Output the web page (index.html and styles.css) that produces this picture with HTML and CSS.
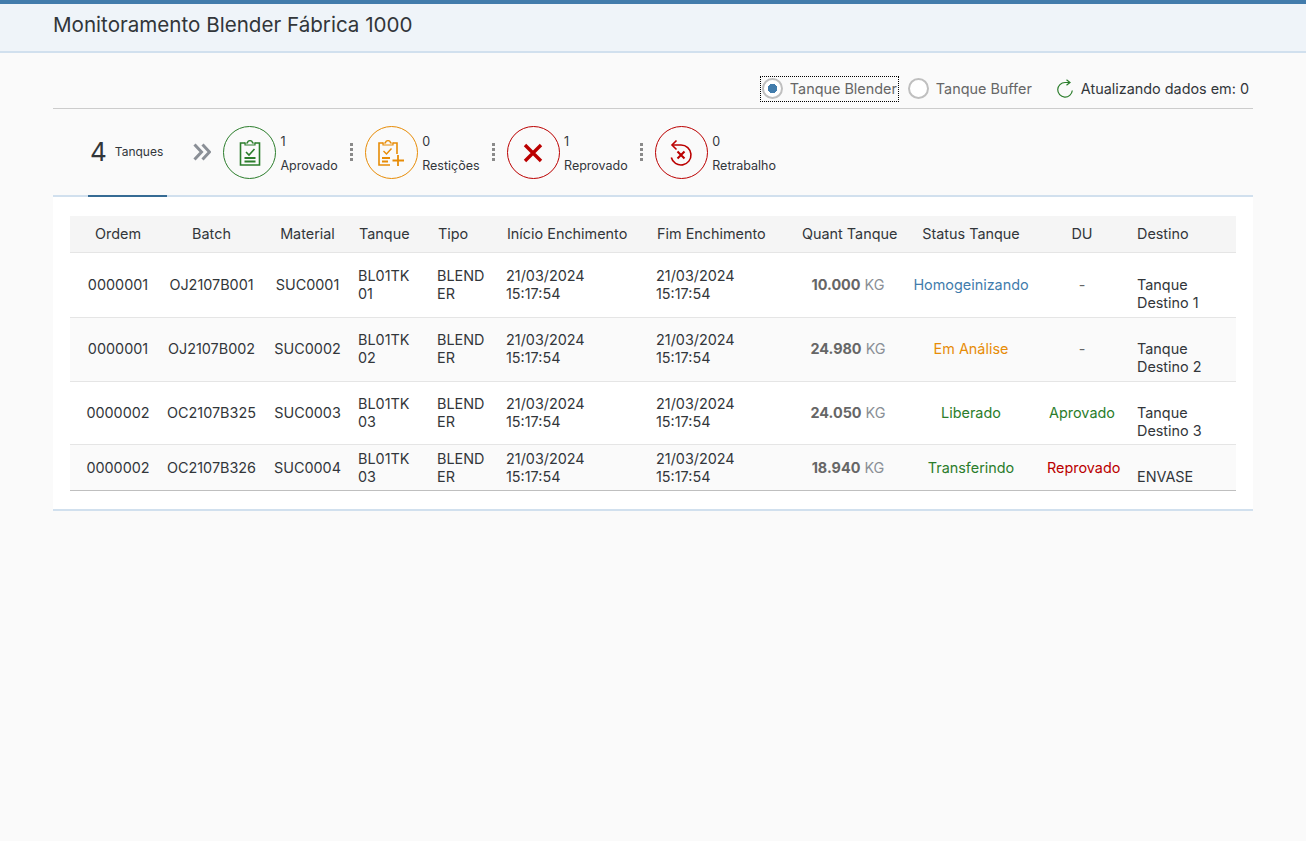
FILE: index.html
```html
<!DOCTYPE html>
<html lang="pt">
<head>
    <meta charset="UTF-8">
    <meta name="viewport" content="width=device-width, initial-scale=1.0">
    <title>Monitoramento Blender</title>
    <link rel="stylesheet" href="styles.css">
</head>
<body>
    <header class="page-header">
        <h1>Monitoramento Blender Fábrica 1000</h1>
    </header>

    <main class="content">
        <div class="toolbar">
            <label class="radio radio-focus"><span class="radio-circle radio-on"></span>Tanque Blender</label>
            <label class="radio"><span class="radio-circle"></span>Tanque Buffer</label>
            <span class="refresh">
                <svg class="refresh-icon" viewBox="0 0 16 20" width="16" height="20">
                    <path d="M13 3.5 H8 A7.3 7.3 0 1 0 15.3 11.5" fill="none" stroke="#2b7d2b" stroke-width="1.2"/>
                    <path d="M9.5 0.8 L13 3.5 L9.5 6.2" fill="none" stroke="#2b7d2b" stroke-width="1.2"/>
                </svg>
                Atualizando dados em: 0
            </span>
        </div>

        <div class="tabs">
            <div class="tab-total"><span class="tab-count">4</span><span class="tab-label">Tanques</span></div>
            <svg class="tab-arrow" viewBox="0 0 18 18" width="18" height="18">
                <path d="M1.5 1.5 L8.5 9 L1.5 16.5 M9.5 1.5 L16.5 9 L9.5 16.5" fill="none" stroke="#8a8f96" stroke-width="3"/>
            </svg>

            <div class="tab-item">
                <span class="tab-icon icon-green">
                    <svg viewBox="0 0 24 28" width="24" height="28">
                        <path d="M7 4 H2.5 V26 H21.5 V4 H17" fill="none" stroke="currentColor" stroke-width="1.6"/>
                        <path d="M7 6 V4 H9.5 C9.5 0.8 14.5 0.8 14.5 4 H17 V6 Z" fill="none" stroke="currentColor" stroke-width="1.2"/>
                        <path d="M8 13 L11 16 L16.5 10" fill="none" stroke="currentColor" stroke-width="1.6"/>
                        <path d="M6.5 19 H17.5 M6.5 22.5 H17.5" stroke="currentColor" stroke-width="1.8"/>
                    </svg>
                </span>
                <span class="tab-text"><span>1</span><span>Aprovado</span></span>
            </div>
            <span class="tab-sep"></span>

            <div class="tab-item">
                <span class="tab-icon icon-orange">
                    <svg viewBox="0 0 28 28" width="28" height="28">
                        <path d="M6 4 H2 V26 H13 M20 15 V4 H16" fill="none" stroke="currentColor" stroke-width="1.6"/>
                        <path d="M6 6 V4 H8.5 C8.5 0.8 13.5 0.8 13.5 4 H16 V6 Z" fill="none" stroke="currentColor" stroke-width="1.2"/>
                        <path d="M6.5 12 L9.5 15 L14.5 9.5" fill="none" stroke="currentColor" stroke-width="1.4"/>
                        <path d="M5 19 H13 M5 22.5 H11" stroke="currentColor" stroke-width="1.8"/>
                        <path d="M21 16 V27 M15.5 21.5 H27" stroke="currentColor" stroke-width="1.8"/>
                    </svg>
                </span>
                <span class="tab-text"><span>0</span><span>Restições</span></span>
            </div>
            <span class="tab-sep"></span>

            <div class="tab-item">
                <span class="tab-icon icon-red">
                    <svg viewBox="0 0 20 20" width="20" height="20">
                        <path d="M2 2 L18 18 M18 2 L2 18" stroke="currentColor" stroke-width="3.4"/>
                    </svg>
                </span>
                <span class="tab-text"><span>1</span><span>Reprovado</span></span>
            </div>
            <span class="tab-sep"></span>

            <div class="tab-item">
                <span class="tab-icon icon-red">
                    <svg viewBox="0 0 26 28" width="26" height="28">
                        <path d="M4 6 H13 A10 10 0 1 1 3.3 18.5" fill="none" stroke="currentColor" stroke-width="1.6"/>
                        <path d="M8.5 1.5 L4 6 L8.5 10.5" fill="none" stroke="currentColor" stroke-width="1.6"/>
                        <path d="M9.5 12.5 L16.5 19.5 M16.5 12.5 L9.5 19.5" stroke="currentColor" stroke-width="2.1"/>
                    </svg>
                </span>
                <span class="tab-text"><span>0</span><span>Retrabalho</span></span>
            </div>
        </div>

        <section class="panel">
            <table class="tank-table">
                <colgroup>
                    <col class="col-ordem">
                    <col class="col-batch">
                    <col class="col-material">
                    <col class="col-tanque">
                    <col class="col-tipo">
                    <col class="col-inicio">
                    <col class="col-fim">
                    <col class="col-quant">
                    <col class="col-status">
                    <col class="col-du">
                    <col class="col-destino">
                </colgroup>
                <thead>
                    <tr>
                        <th class="center">Ordem</th>
                        <th class="center">Batch</th>
                        <th class="center">Material</th>
                        <th>Tanque</th>
                        <th>Tipo</th>
                        <th>Início Enchimento</th>
                        <th>Fim Enchimento</th>
                        <th class="center">Quant Tanque</th>
                        <th class="center">Status Tanque</th>
                        <th class="center">DU</th>
                        <th class="destino">Destino</th>
                    </tr>
                </thead>
                <tbody>
                    <tr class="row-h64">
                        <td class="center">0000001</td>
                        <td class="center">OJ2107B001</td>
                        <td class="center">SUC0001</td>
                        <td>BL01TK<br>01</td>
                        <td>BLEND<br>ER</td>
                        <td>21/03/2024<br>15:17:54</td>
                        <td>21/03/2024<br>15:17:54</td>
                        <td class="center"><b class="qty">10.000</b> <span class="unit">KG</span></td>
                        <td class="center st-blue">Homogeinizando</td>
                        <td class="center st-dash">-</td>
                        <td class="destino"><br>Tanque<br>Destino 1</td>
                    </tr>
                    <tr class="row-alt row-h63">
                        <td class="center">0000001</td>
                        <td class="center">OJ2107B002</td>
                        <td class="center">SUC0002</td>
                        <td>BL01TK<br>02</td>
                        <td>BLEND<br>ER</td>
                        <td>21/03/2024<br>15:17:54</td>
                        <td>21/03/2024<br>15:17:54</td>
                        <td class="center"><b class="qty">24.980</b> <span class="unit">KG</span></td>
                        <td class="center st-orange">Em Análise</td>
                        <td class="center st-dash">-</td>
                        <td class="destino"><br>Tanque<br>Destino 2</td>
                    </tr>
                    <tr>
                        <td class="center">0000002</td>
                        <td class="center">OC2107B325</td>
                        <td class="center">SUC0003</td>
                        <td>BL01TK<br>03</td>
                        <td>BLEND<br>ER</td>
                        <td>21/03/2024<br>15:17:54</td>
                        <td>21/03/2024<br>15:17:54</td>
                        <td class="center"><b class="qty">24.050</b> <span class="unit">KG</span></td>
                        <td class="center st-green">Liberado</td>
                        <td class="center st-green">Aprovado</td>
                        <td class="destino"><br>Tanque<br>Destino 3</td>
                    </tr>
                    <tr class="row-alt row-last">
                        <td class="center">0000002</td>
                        <td class="center">OC2107B326</td>
                        <td class="center">SUC0004</td>
                        <td>BL01TK<br>03</td>
                        <td>BLEND<br>ER</td>
                        <td>21/03/2024<br>15:17:54</td>
                        <td>21/03/2024<br>15:17:54</td>
                        <td class="center"><b class="qty">18.940</b> <span class="unit">KG</span></td>
                        <td class="center st-green">Transferindo</td>
                        <td class="center st-red">Reprovado</td>
                        <td class="destino"><br>ENVASE</td>
                    </tr>
                </tbody>
            </table>
        </section>
    </main>
</body>
</html>
```

FILE: styles.css
```css
* {
    box-sizing: border-box;
}

body {
    font-family: Inter, "Noto Sans", Arial, sans-serif;
    font-size: 14.4px;
    line-height: 18px;
    color: #32363a;
    background-color: #fafafa;
    margin: 0;
    min-height: 100vh;
}

.page-header {
    height: 53px;
    padding: 8px 53px 0;
    background-color: #eff4f9;
    border-top: 4px solid #427cac;
    border-bottom: 2px solid #d1e0ee;
}

.page-header h1 {
    margin: 0;
    font-size: 20.6px;
    line-height: 26px;
    font-weight: 400;
}

.content {
    padding: 24px 53px 0;
}

.toolbar {
    display: flex;
    justify-content: flex-end;
    align-items: center;
    height: 32px;
    padding: 0 4px 8px 0;
    border-bottom: 1px solid #cccccc;
}

.radio {
    display: flex;
    align-items: center;
    height: 24px;
    color: #666666;
}

.radio-focus {
    outline: 1px dotted #000;
    padding: 0 1px;
    margin-right: 10px;
}

.radio-circle {
    width: 21px;
    height: 21px;
    margin-right: 7px;
    border: 2px solid #bfbfbf;
    border-radius: 50%;
    background-color: #fff;
}

.radio-on {
    background: radial-gradient(circle, #427cac 0 4.5px, #fff 5px);
}

.refresh {
    display: flex;
    align-items: center;
    gap: 8px;
    margin-left: 25px;
}

.refresh-icon {
    display: block;
}

.tabs {
    display: flex;
    align-items: center;
    height: 88px;
    padding: 0 0 0 35px;
    border-bottom: 2px solid #d1e0ee;
}

.tab-total {
    display: flex;
    align-items: center;
    align-self: stretch;
    width: 79px;
    margin-bottom: -2px;
    padding-left: 2px;
    border-bottom: 2px solid #366b94;
}

.tab-count {
    font-size: 26px;
    margin-right: 8px;
}

.tab-label {
    font-size: 12px;
}

.tab-arrow {
    margin: 0 12px 0 26px;
}

.tab-item {
    display: flex;
    align-items: center;
}

.tab-icon {
    display: flex;
    align-items: center;
    justify-content: center;
    width: 53px;
    height: 53px;
    margin-right: 4.5px;
    border: 1px solid currentColor;
    border-radius: 50%;
}

.tab-icon svg {
    margin-top: 2px;
}

.icon-green {
    color: #2b7d2b;
}

.icon-orange {
    color: #e78c07;
}

.icon-red {
    color: #bb0000;
}

.tab-text {
    display: flex;
    flex-direction: column;
    gap: 6px;
    padding-top: 4px;
    font-size: 12.5px;
}

.tab-sep {
    width: 3px;
    height: 18px;
    margin: 0 12px;
    background: repeating-linear-gradient(#8a8a8a 0 3px, transparent 3px 5px);
}

.panel {
    height: 314px;
    padding: 19px 17px 0;
    background-color: #fff;
    border-bottom: 2px solid #d1e0ee;
}

.tank-table {
    width: 1166px;
    table-layout: fixed;
    border-collapse: collapse;
}

.col-ordem { width: 96px; }
.col-batch { width: 91px; }
.col-material { width: 101px; }
.col-tanque { width: 79px; }
.col-tipo { width: 69px; }
.col-inicio { width: 150px; }
.col-fim { width: 145px; }
.col-quant { width: 94px; }
.col-status { width: 152px; }
.col-du { width: 70px; }
.col-destino { width: 119px; }

.tank-table th {
    height: 36px;
    font-weight: 400;
    text-align: left;
    background-color: #f5f5f5;
    border-bottom: 1px solid #e5e5e5;
    white-space: nowrap;
}

.tank-table td {
    padding: 4px 0;
    border-bottom: 1px solid #e5e5e5;
}

.tank-table .center {
    text-align: center;
    white-space: nowrap;
}

.tank-table .destino {
    padding-left: 20px;
}

.row-h64 {
    height: 65px;
}

.row-h63 {
    height: 64px;
}

.row-last {
    height: 46px;
}

.row-alt {
    background-color: #fafafa;
}

.tank-table .row-last td {
    padding: 5px 0 3px;
    border-bottom-color: #bfbfbf;
}

.tank-table .row-last .destino {
    padding-left: 20px;
}

.qty {
    color: #666666;
}

.unit {
    color: #8a8f96;
}

.st-blue {
    color: #427cac;
}

.st-orange {
    color: #e78c07;
}

.st-green {
    color: #2b7d2b;
}

.st-red {
    color: #bb0000;
}

.st-dash {
    color: #666666;
}
```
